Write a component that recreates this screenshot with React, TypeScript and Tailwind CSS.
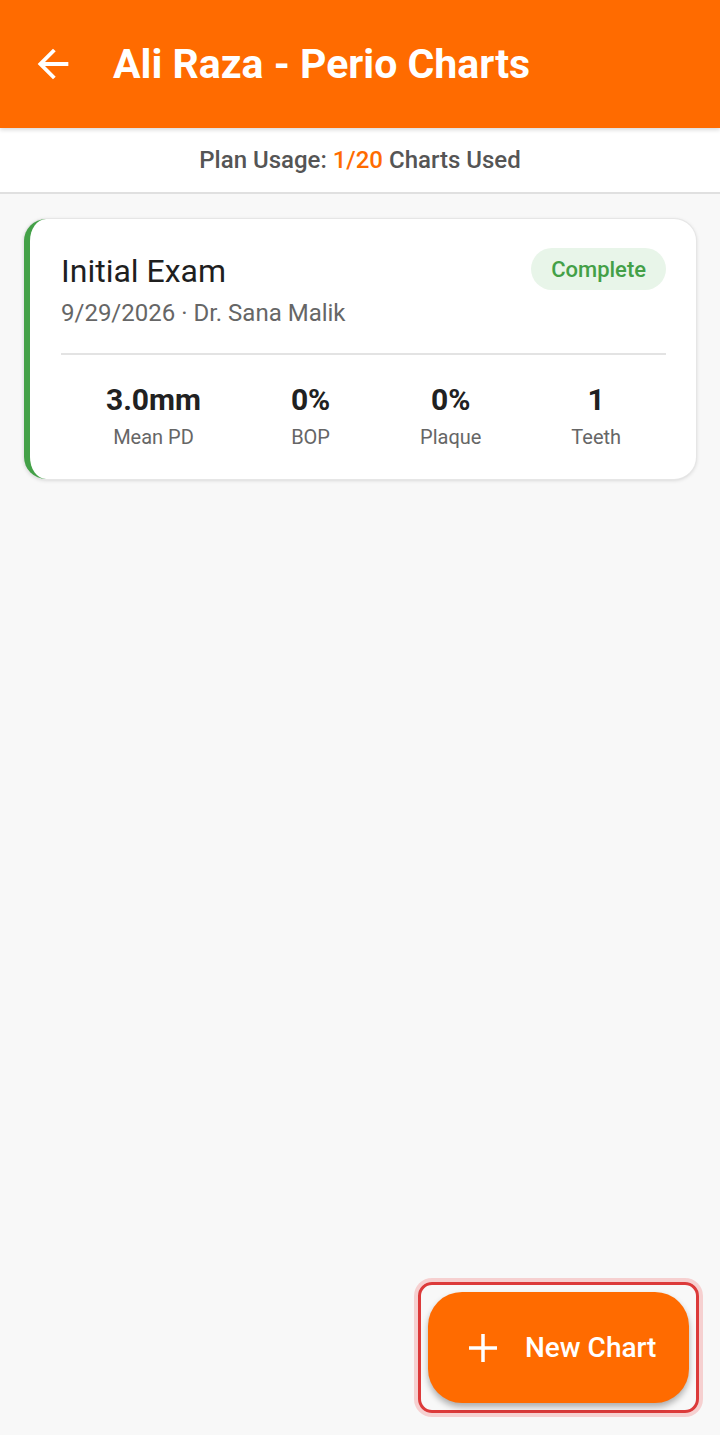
const FONT = { fontFamily: 'Roboto, "Noto Sans", "Liberation Sans", sans-serif' };

const STATS = [
  { value: '3.0mm', label: 'Mean PD' },
  { value: '0%', label: 'BOP' },
  { value: '0%', label: 'Plaque' },
  { value: '1', label: 'Teeth' },
];

function BackArrow() {
  return (
    <svg width="46" height="46" viewBox="0 0 24 24" fill="white">
      <path d="M20 11H7.83l5.59-5.59L12 4l-8 8 8 8 1.41-1.41L7.83 13H20v-2z" />
    </svg>
  );
}

function ChartCard() {
  return (
    <div className="mx-6 mt-[25px] rounded-[22px] border-l-[6px] border-[#43a047] bg-white pl-[31px] pr-[30px] pt-[29px] pb-[29px] shadow-[0_1px_4px_rgba(0,0,0,0.18)] ring-1 ring-[#e6e6e6]">
      <div className="flex items-start justify-between">
        <div>
          <div className="text-[32px] leading-[46px] text-[#1f1f1f]">Initial Exam</div>
          <div className="mt-[4px] text-[24px] leading-[30px] text-[#666]">9/29/2026 · Dr. Sana Malik</div>
        </div>
        <div className="flex h-[42px] items-center rounded-full bg-[#e8f5e9] px-[20px] text-[22px] font-medium text-[#43a047]">
          Complete
        </div>
      </div>
      <div className="mt-[25px] h-[2px] bg-[#e3e3e3]" />
      <div className="mt-[27px] flex justify-around">
        {STATS.map((s) => (
          <div key={s.label} className="flex flex-col items-center">
            <span className="text-[30px] font-bold leading-[36px] text-[#212121]">{s.value}</span>
            <span className="mt-[6px] text-[20px] leading-[26px] text-[#666]">{s.label}</span>
          </div>
        ))}
      </div>
    </div>
  );
}

export default function App() {
  return (
    <div className="relative h-[1435px] w-[720px] overflow-hidden bg-[#f8f8f8]" style={FONT}>
      {/* Header */}
      <div className="relative z-10 flex h-[128px] items-center bg-[#ff6b00] pl-[30px] shadow-[0_2px_4px_rgba(0,0,0,0.15)]">
        <BackArrow />
        <h1 className="ml-[37px] text-[41px] font-bold leading-[48px] text-white">Ali Raza - Perio Charts</h1>
      </div>

      {/* Plan usage */}
      <div className="flex h-[66px] items-center justify-center border-b-2 border-[#e0e0e0] bg-white text-[24px] font-medium text-[#555]">
        Plan Usage:&nbsp;<span className="text-[#ff6b00]">1/20</span>&nbsp;Charts Used
      </div>

      <ChartCard />

      {/* Floating action button */}
      <div className="absolute bottom-[22px] right-[21px] rounded-[14px] border-[3px] border-[#dc3a3a] p-[7px] ring-4 ring-[#f6d0d0]">
        <button className="flex h-[111px] w-[261px] items-center rounded-[34px] bg-[#ff6b00] pl-[40px] shadow-[0_4px_6px_rgba(0,0,0,0.3)]">
          <svg width="30" height="30" viewBox="0 0 30 30" stroke="white" strokeWidth="3.5">
            <path d="M15 1v28M1 15h28" />
          </svg>
          <span className="ml-[27px] text-[28px] font-medium text-white">New Chart</span>
        </button>
      </div>
    </div>
  );
}
